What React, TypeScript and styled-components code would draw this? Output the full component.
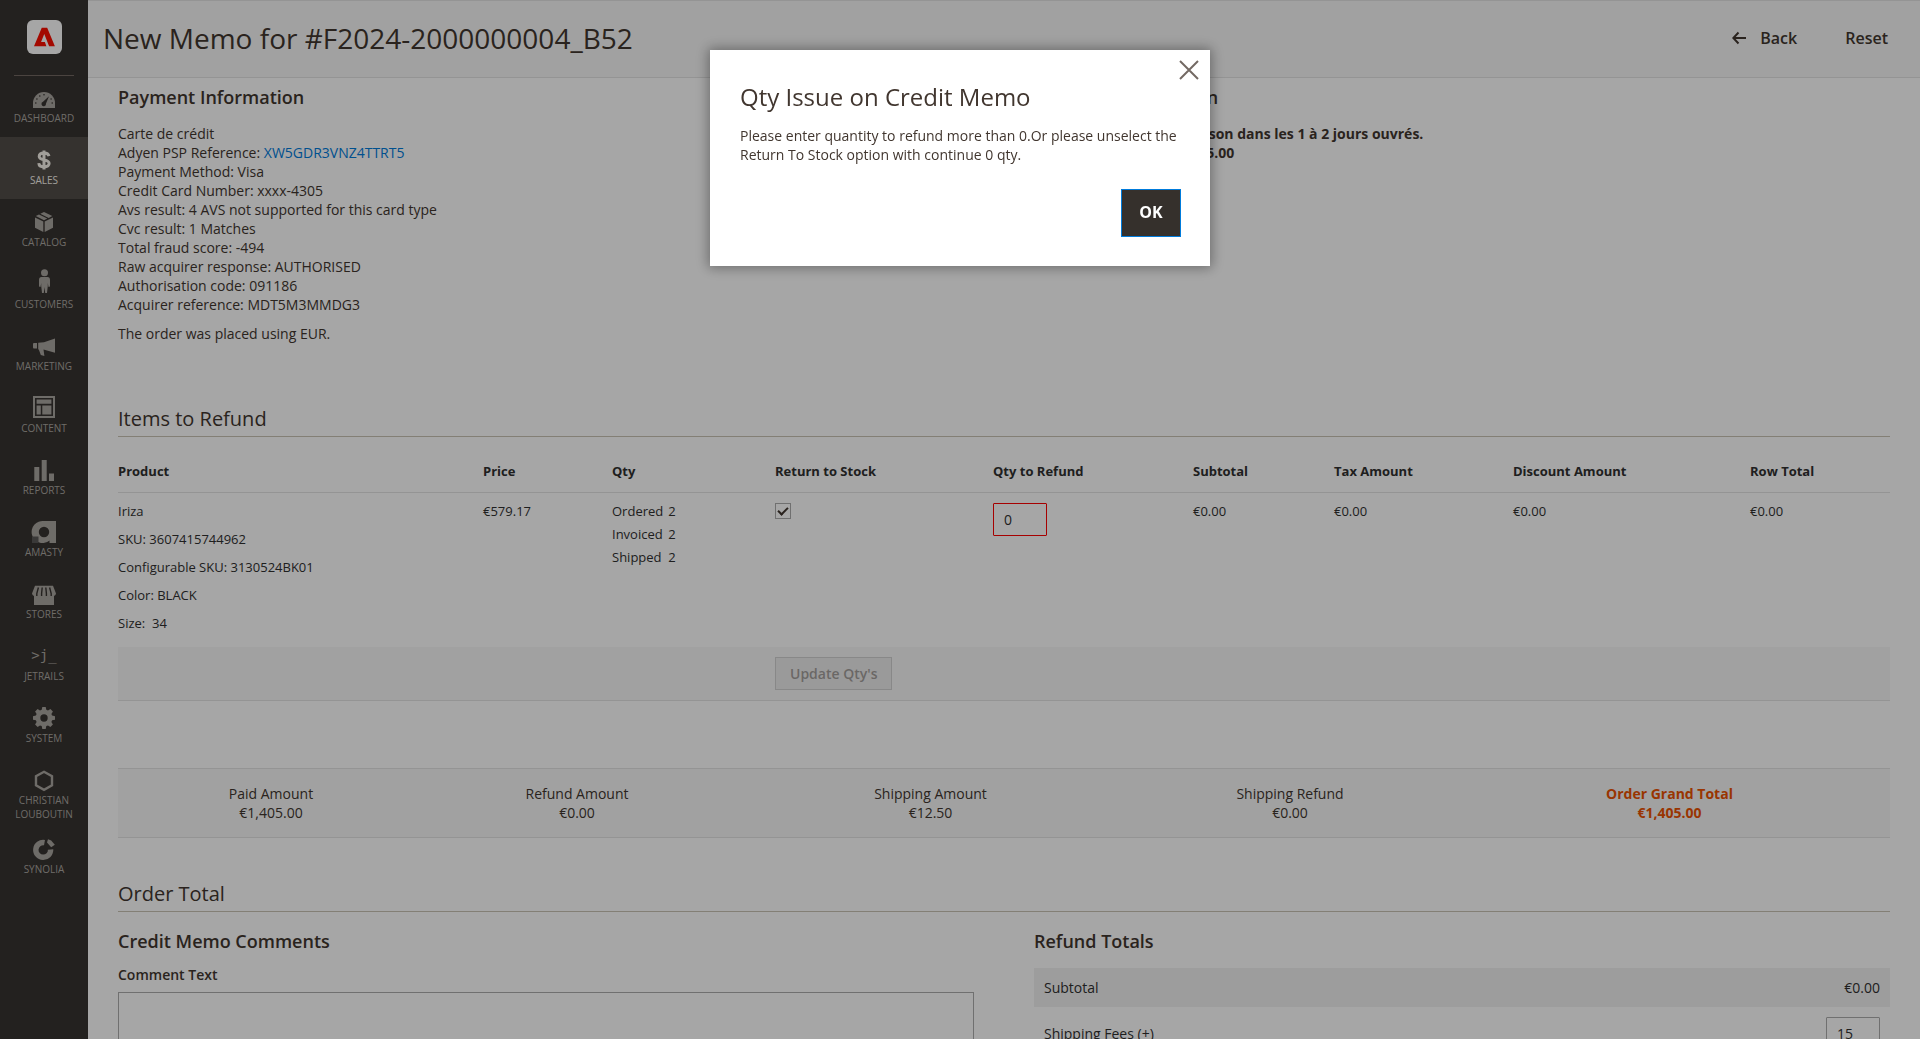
import React from "react";
import styled, { createGlobalStyle, css } from "styled-components";

const GlobalStyle = createGlobalStyle`
  *, *::before, *::after { box-sizing: border-box; }
  body {
    margin: 0;
    background: #fff;
    color: #41362f;
    font-family: "Open Sans", "Noto Sans", sans-serif;
    font-size: 14px;
    line-height: 19px;
  }
  button, input, textarea { font: inherit; color: inherit; }
  h1, h2, h3, p, dl, dd, ul { margin: 0; padding: 0; }
`;

/* ---------- shell ---------- */

const Shell = styled.div`
  display: flex;
  height: 100vh;
  overflow: hidden;
`;

const Sidebar = styled.nav`
  flex: none;
  width: 88px;
  background: #373330;
`;

const LogoLink = styled.a`
  display: flex;
  justify-content: center;
  height: 75px;
  margin: 0 14px;
  padding-top: 20px;
  svg { display: block; width: 35px; height: 34px; }
`;

const Menu = styled.ul`
  list-style: none;
  position: relative;
  &::before {
    content: "";
    position: absolute;
    top: 0;
    left: 14px;
    right: 14px;
    border-top: 1px solid #736963;
  }
`;

const MenuLink = styled.a<{ $active?: boolean }>`
  display: flex;
  flex-direction: column;
  align-items: center;
  min-height: 62px;
  padding: 8px 4px 5px;
  color: #aaa6a0;
  font-size: 10px;
  line-height: 14px;
  text-align: center;
  text-transform: uppercase;
  text-decoration: none;
  svg { display: block; width: 28px; height: 28px; fill: currentColor; text-transform: none; }
  ${(p) => p.$active && css`background: #524d49; color: #f7f3eb;`}
`;

const Page = styled.div`
  flex: 1;
  min-width: 0;
`;

const PageHeader = styled.header`
  display: flex;
  align-items: center;
  justify-content: space-between;
  height: 78px;
  padding: 0 32px 2px 15px;
  background: #f8f8f8;
  border-top: 1px solid #e3e3e3;
  border-bottom: 1px solid #e3e3e3;
`;

const PageTitle = styled.h1`
  font-size: 28px;
  font-weight: 400;
  line-height: 36px;
`;

const HeaderActions = styled.div`
  display: flex;
  gap: 48px;
`;

const HeaderButton = styled.button`
  display: flex;
  align-items: center;
  gap: 14px;
  padding: 0;
  border: 0;
  background: none;
  font-size: 16px;
  font-weight: 600;
  line-height: 22px;
  svg { display: block; width: 14px; height: 14px; }
`;

const Content = styled.main`
  padding: 8px 30px 0;
`;

const Columns = styled.div`
  display: grid;
  grid-template-columns: 1fr 1fr;
  column-gap: 60px;
`;

/* ---------- headings ---------- */

const BlockTitle = styled.h3`
  font-size: 18px;
  font-weight: 600;
  line-height: 23px;
`;

const SectionTitle = styled.h2`
  padding-bottom: 3px;
  border-bottom: 1px solid #cac3b4;
  font-size: 20px;
  font-weight: 400;
  line-height: 28px;
`;

/* ---------- payment and shipping ---------- */

const InfoRow = styled(Columns)`
  margin-bottom: 62px;
`;

const InfoText = styled.div<{ $strong?: boolean }>`
  margin-top: 15px;
  font-weight: ${(p) => (p.$strong ? 700 : 400)};
  a { color: #007bdb; text-decoration: none; }
`;

const Note = styled.p`
  margin-top: 10px;
`;

/* ---------- items table ---------- */

const ItemsTable = styled.table`
  width: 100%;
  margin-top: 15px;
  table-layout: fixed;
  border-collapse: collapse;
  color: #303030;
  font-size: 13px;
  line-height: 18px;
  th, td { padding: 0; text-align: left; vertical-align: top; }
  th { padding: 10px 0 12px; font-weight: 700; }
  thead tr { border-bottom: 1px solid #e3e3e3; }
  tbody td { padding: 9px 0 15px; }
  tbody input { margin-top: 1px; }
  tfoot tr { background: #f8f8f8; border-bottom: 1px solid #e3e3e3; }
  tfoot td { padding: 10px 0; }
`;

const ProductLines = styled.div`
  display: grid;
  row-gap: 10px;
`;

const QtyList = styled.dl`
  display: grid;
  grid-template-columns: max-content max-content;
  gap: 5px;
`;

const CheckBox = styled.input`
  appearance: none;
  display: grid;
  place-items: center;
  width: 16px;
  height: 16px;
  margin: 1px 0 0;
  border: 1px solid #adadad;
  background: #fff;
  &:checked::after {
    content: "";
    width: 10px;
    height: 6px;
    margin-bottom: 3px;
    border-left: 2px solid #41362f;
    border-bottom: 2px solid #41362f;
    transform: rotate(-45deg);
  }
`;

const NumberBox = styled.input<{ $error?: boolean }>`
  display: block;
  width: 54px;
  height: 33px;
  padding: 0 10px;
  border: 1px solid ${(p) => (p.$error ? "#ff0000" : "#adadad")};
  border-radius: 1px;
  background: #fff;
  color: #303030;
  font-size: 14px;
`;

const UpdateButton = styled.button`
  display: block;
  height: 33px;
  padding: 0 14px;
  border: 1px solid #adadad;
  background: #e3e3e3;
  color: #514943;
  font-size: 14px;
  font-weight: 600;
  white-space: nowrap;
  opacity: 0.5;
`;

/* ---------- totals ---------- */

const AmountBar = styled.dl`
  display: grid;
  grid-template-columns: 306fr 306fr 401fr 318fr 441fr;
  margin: 67px 0 42px;
  padding: 15px 0;
  border-top: 1px solid #e3e3e3;
  border-bottom: 1px solid #e3e3e3;
  background: #f8f8f8;
  text-align: center;
`;

const Amount = styled.div<{ $grand?: boolean }>`
  ${(p) => p.$grand && css`color: #eb5202; font-weight: 700;`}
`;

const TotalsRow = styled(Columns)`
  margin-top: 18px;
`;

const CommentLabel = styled.label`
  display: block;
  margin: 12px 0 7px;
  font-weight: 600;
  line-height: 20px;
`;

const CommentBox = styled.textarea`
  display: block;
  width: 100%;
  height: 90px;
  padding: 8px 10px;
  border: 1px solid #adadad;
  background: #fff;
  resize: none;
`;

const TotalsTable = styled.table`
  width: 100%;
  margin-top: 15px;
  border-collapse: collapse;
  color: #303030;
  th, td { padding: 10px; font-weight: 400; text-align: left; }
  td { text-align: right; }
  tr:nth-child(odd) { background: #f2f2f2; }
  input { margin-left: auto; }
`;

/* ---------- modal ---------- */

const Overlay = styled.div`
  position: fixed;
  inset: 0;
  display: flex;
  align-items: flex-start;
  justify-content: center;
  padding-top: 50px;
  background: rgba(0, 0, 0, 0.35);
`;

const Dialog = styled.div`
  position: relative;
  width: 500px;
  padding: 30px 29px 29px 30px;
  background: #fff;
  box-shadow: 0 0 12px 2px rgba(0, 0, 0, 0.35);
`;

const DialogTitle = styled.h2`
  margin-bottom: 12px;
  font-size: 24px;
  font-weight: 400;
  line-height: 34px;
`;

const DialogFooter = styled.div`
  display: flex;
  justify-content: flex-end;
  margin-top: 25px;
`;

const PrimaryButton = styled.button`
  width: 60px;
  height: 48px;
  padding: 0 0 2px;
  border: 1px solid #007bdb;
  background: #35302c;
  color: #fff;
  font-size: 16px;
  font-weight: 700;
`;

const CloseButton = styled.button`
  position: absolute;
  top: 10px;
  right: 11px;
  padding: 0;
  border: 0;
  background: none;
  color: #736963;
  svg { display: block; width: 20px; height: 20px; }
`;

/* ---------- icons ---------- */

const icons: Record<string, React.ReactNode> = {
  dashboard: (
    <>
      <path d="M3 25V20a11 11 0 0 1 22 0v5z" />
      <g fill="#373330">
        <circle cx="5.8" cy="20" r="0.8" />
        <circle cx="6.9" cy="16" r="0.8" />
        <circle cx="9.8" cy="13" r="0.8" />
        <circle cx="14" cy="11.8" r="0.8" />
        <circle cx="22.2" cy="20" r="0.8" />
        <circle cx="21.1" cy="16" r="0.8" />
        <path d="M19 13.2 16 20.6a2.3 2.3 0 1 1-3-1.8z" />
      </g>
    </>
  ),
  sales: (
    <path
      d="M14 5.500v19M19 11.200c-.5-2.100-2.400-3.200-4.900-3.200-2.700 0-4.900 1.200-4.900 3.500 0 4.600 9.900 2.100 9.900 6.800 0 2.500-2.400 3.600-5.100 3.600-2.900 0-5-1.300-5.200-3.800"
      fill="none"
      stroke="currentColor"
      strokeWidth="3"
    />
  ),
  catalog: (
    <>
      <path d="M5 10.4 13.3 14.5V25L5 20.7zM23 10.4 14.7 14.5V25L23 20.7z" />
      <path d="M5.8 9.1 9 7.4l8.300 4.200-3.300 1.700zM10.300 6.700 14 4.900l8.300 4.200-3.600 1.800z" />
    </>
  ),
  customers: (
    <>
      <circle cx="14.5" cy="3.7" r="3.5" />
      <path d="M11.500 8h6q2.500 0 2.500 3v6.500l-1.500.5-.7-4v3L17 24h-1.800l-.7-6-.7 6H12l-.8-7v-3l-.7 4-1.500-.5V11q0-3 2.500-3z" />
    </>
  ),
  marketing: <path d="M25 7.500v14.200l-11.500-3.200.9 6.400-3.600-1-2-5.400H8.200V11.700L14 11.300zM3.500 12h3.500v5.400H3.500l-.5-1v-3.400z" />,
  content: (
    <path
      fillRule="evenodd"
      d="M3 3h22v22H3zM5 5v18h18V5zM6.600 6.600h14.800v4.200H6.600zM6.600 12.400h4.200v9H6.600zM12.300 12.400h9.100v9h-9.100z"
    />
  ),
  reports: <path d="M4.300 12h5v14h-5zM11.700 5h5v21h-5zM19 18.500h5V26h-5z" />,
  amasty: (
    <>
      <path fillRule="evenodd" d="M14 4h12v22h-6.500v-2.500A11 11 0 1 1 14 4zM14 9.800a5.200 5.200 0 1 0 0 10.400 5.200 5.200 0 0 0 0-10.400z" />
      <path fill="#5a5856" d="M2 19.500h6.500V26H2z" />
    </>
  ),
  stores: (
    <>
      <path d="M5 6.800h18l3 7.700a3 3 0 0 1-2 2.500v9H4v-9a3 3 0 0 1-2-2.500z" />
      <g stroke="#373330" strokeWidth="1.4" fill="none">
        <path d="M8.400 8.500 6.800 14.500v2.500M12.200 8.500l-.6 6v2.500M15.800 8.500l.6 6v2.500M19.600 8.500l1.600 6v2.500" />
      </g>
    </>
  ),
  jetrails: (
    <text x="14" y="19" textAnchor="middle" fontFamily="'DejaVu Sans Mono', monospace" fontSize="14">
      {">j_"}
    </text>
  ),
  system: (
    <path
      fillRule="evenodd"
      d="M12.300 4h3.400l.6 2.700 1.700.7L20.400 6l2.500 2.500-1.500 2.400.7 1.700 2.900.6v3.500l-2.900.6-.7 1.700 1.500 2.400-2.500 2.500-2.400-1.500-1.700.7-.6 2.900h-3.400l-.6-2.900-1.700-.7-2.400 1.500-2.500-2.500 1.500-2.400-.7-1.700L3 16.700v-3.500l2.900-.6.7-1.700-1.500-2.400L7.600 6 10 7.400l1.700-.7zM14 11.300a3.700 3.700 0 1 0 0 7.400 3.700 3.700 0 0 0 0-7.400z"
    />
  ),
  christian: <path d="M14 6.800 22 11.300v9L14 24.800 6 20.300v-9z" fill="none" stroke="currentColor" strokeWidth="2.4" />,
  synolia: (
    <>
      <path d="M14.500 8.600A7.400 7.400 0 1 0 20.600 15.500" fill="none" stroke="currentColor" strokeWidth="5.4" />
      <path d="M18 5.200l3.200 1.400 3.600 4.200-3.600 2.400-4.200-4.600z" />
    </>
  ),
};

const menu: { id: string; label: string }[] = [
  { id: "dashboard", label: "Dashboard" },
  { id: "sales", label: "Sales" },
  { id: "catalog", label: "Catalog" },
  { id: "customers", label: "Customers" },
  { id: "marketing", label: "Marketing" },
  { id: "content", label: "Content" },
  { id: "reports", label: "Reports" },
  { id: "amasty", label: "Amasty" },
  { id: "stores", label: "Stores" },
  { id: "jetrails", label: "JetRails" },
  { id: "system", label: "System" },
  { id: "christian", label: "Christian Louboutin" },
  { id: "synolia", label: "Synolia" },
];

const columnWidths = [365, 129, 163, 218, 200, 141, 179, 237, 140];
const columnNames = [
  "Product",
  "Price",
  "Qty",
  "Return to Stock",
  "Qty to Refund",
  "Subtotal",
  "Tax Amount",
  "Discount Amount",
  "Row Total",
];

const amounts = [
  { name: "Paid Amount", value: "€1,405.00" },
  { name: "Refund Amount", value: "€0.00" },
  { name: "Shipping Amount", value: "€12.50" },
  { name: "Shipping Refund", value: "€0.00" },
  { name: "Order Grand Total", value: "€1,405.00", grand: true },
];

export default function App() {
  return (
    <>
      <GlobalStyle />
      <Shell>
        <Sidebar aria-label="Main menu">
          <LogoLink href="#" aria-label="Adobe Commerce">
            <svg viewBox="0 0 35 34">
              <rect width="35" height="34" rx="6" fill="#fff" />
              <path
                transform="translate(7 7.4) scale(0.87)"
                d="M14.235 21.620 12.492 16.770H8.117L11.795 7.512 17.374 21.620H24L15.155.38H8.909L0 21.620z"
                fill="#fa0f00"
              />
            </svg>
          </LogoLink>
          <Menu>
            {menu.map((m) => (
              <li key={m.id}>
                <MenuLink href="#" $active={m.id === "sales"}>
                  <svg viewBox="0 0 28 28" aria-hidden="true">{icons[m.id]}</svg>
                  {m.label}
                </MenuLink>
              </li>
            ))}
          </Menu>
        </Sidebar>

        <Page>
          <PageHeader>
            <PageTitle>New Memo for #F2024-2000000004_B52</PageTitle>
            <HeaderActions>
              <HeaderButton type="button">
                <svg viewBox="0 0 14 14" fill="none" stroke="currentColor" strokeWidth="2" aria-hidden="true">
                  <path d="M14 7H1.500M6.500 1.500 1.300 7l5.200 5.500" />
                </svg>
                Back
              </HeaderButton>
              <HeaderButton type="button">Reset</HeaderButton>
            </HeaderActions>
          </PageHeader>

          <Content>
            <InfoRow>
              <section>
                <BlockTitle>Payment Information</BlockTitle>
                <InfoText>
                  <div>Carte de crédit</div>
                  <div>
                    Adyen PSP Reference: <a href="#">XW5GDR3VNZ4TTRT5</a>
                  </div>
                  <div>Payment Method: Visa</div>
                  <div>Credit Card Number: xxxx-4305</div>
                  <div>Avs result: 4 AVS not supported for this card type</div>
                  <div>Cvc result: 1 Matches</div>
                  <div>Total fraud score: -494</div>
                  <div>Raw acquirer response: AUTHORISED</div>
                  <div>Authorisation code: 091186</div>
                  <div>Acquirer reference: MDT5M3MMDG3</div>
                </InfoText>
                <Note>The order was placed using EUR.</Note>
              </section>
              <section>
                <BlockTitle>Shipping Information</BlockTitle>
                <InfoText $strong>
                  <div>Colissimo Express - Livraison dans les 1 à 2 jours ouvrés.</div>
                  <div>Total Shipping Charge:€15.00</div>
                </InfoText>
              </section>
            </InfoRow>

            <SectionTitle>Items to Refund</SectionTitle>
            <ItemsTable>
              <colgroup>
                {columnWidths.map((w, i) => (
                  <col key={i} width={w} />
                ))}
              </colgroup>
              <thead>
                <tr>
                  {columnNames.map((c) => (
                    <th key={c} scope="col">{c}</th>
                  ))}
                </tr>
              </thead>
              <tbody>
                <tr>
                  <td>
                    <ProductLines>
                      <div>Iriza</div>
                      <div>SKU: 3607415744962</div>
                      <div>Configurable SKU: 3130524BK01</div>
                      <div>Color: BLACK</div>
                      <div>Size:&nbsp; 34</div>
                    </ProductLines>
                  </td>
                  <td>€579.17</td>
                  <td>
                    <QtyList>
                      <dt>Ordered</dt><dd>2</dd>
                      <dt>Invoiced</dt><dd>2</dd>
                      <dt>Shipped</dt><dd>2</dd>
                    </QtyList>
                  </td>
                  <td><CheckBox type="checkbox" defaultChecked aria-label="Return to Stock" /></td>
                  <td><NumberBox type="text" defaultValue="0" $error aria-label="Qty to Refund" /></td>
                  <td>€0.00</td>
                  <td>€0.00</td>
                  <td>€0.00</td>
                  <td>€0.00</td>
                </tr>
              </tbody>
              <tfoot>
                <tr>
                  <td colSpan={3} />
                  <td colSpan={6}><UpdateButton type="button" disabled>Update Qty's</UpdateButton></td>
                </tr>
              </tfoot>
            </ItemsTable>

            <AmountBar>
              {amounts.map((a) => (
                <Amount key={a.name} $grand={a.grand}>
                  <dt>{a.name}</dt>
                  <dd>{a.value}</dd>
                </Amount>
              ))}
            </AmountBar>

            <SectionTitle>Order Total</SectionTitle>
            <TotalsRow>
              <section>
                <BlockTitle>Credit Memo Comments</BlockTitle>
                <CommentLabel htmlFor="comment">Comment Text</CommentLabel>
                <CommentBox id="comment" />
              </section>
              <section>
                <BlockTitle>Refund Totals</BlockTitle>
                <TotalsTable>
                  <tbody>
                    <tr>
                      <th scope="row">Subtotal</th>
                      <td>€0.00</td>
                    </tr>
                    <tr>
                      <th scope="row"><label htmlFor="fees">Shipping Fees (+)</label></th>
                      <td><NumberBox id="fees" type="text" defaultValue="15" /></td>
                    </tr>
                  </tbody>
                </TotalsTable>
              </section>
            </TotalsRow>
          </Content>
        </Page>
      </Shell>

      <Overlay>
        <Dialog role="dialog" aria-modal="true" aria-labelledby="dialog-title">
          <CloseButton type="button" aria-label="Close">
            <svg viewBox="0 0 20 20" fill="none" stroke="currentColor" strokeWidth="2" aria-hidden="true">
              <path d="M1 1l18 18M19 1 1 19" />
            </svg>
          </CloseButton>
          <DialogTitle id="dialog-title">Qty Issue on Credit Memo</DialogTitle>
          <p>Please enter quantity to refund more than 0.Or please unselect the Return To Stock option with continue 0 qty.</p>
          <DialogFooter>
            <PrimaryButton type="button">OK</PrimaryButton>
          </DialogFooter>
        </Dialog>
      </Overlay>
    </>
  );
}
